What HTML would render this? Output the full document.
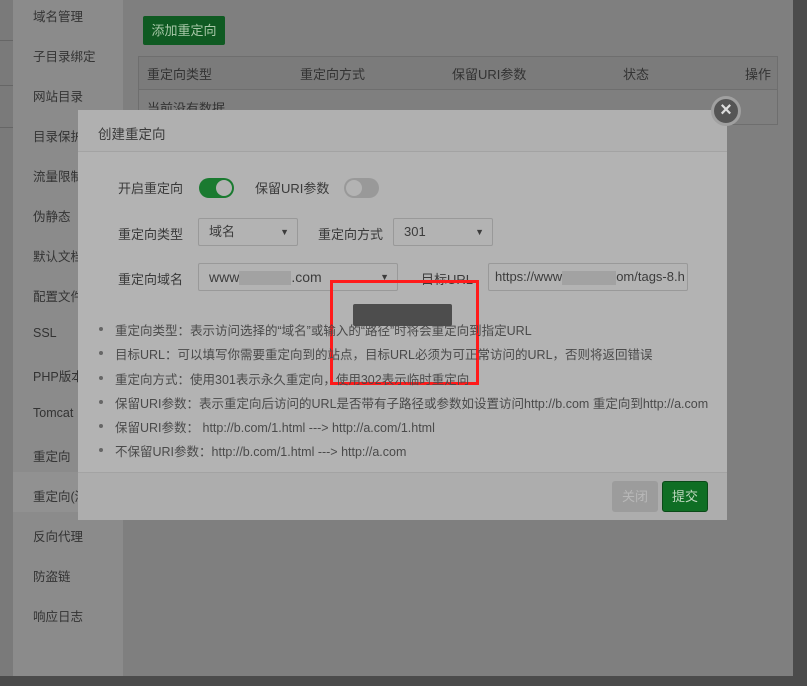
<!DOCTYPE html>
<html><head><meta charset="utf-8"><style>
*{margin:0;padding:0;box-sizing:border-box}
body{width:807px;height:686px;overflow:hidden;background:#4b4b4b;font-family:"Liberation Sans","Noto Sans CJK SC",sans-serif;font-size:13px;color:#3a3a3a;position:relative}
.a{position:absolute}
.strip{left:0;top:0;width:13px;height:676px;background:#7a7a7a}
.side{left:13px;top:0;width:110px;height:676px;background:#8b8b8b}
.side div{position:absolute;left:20px;font-size:12.5px;color:#333;white-space:nowrap}
.main{left:123px;top:0;width:670px;height:676px;background:#7f7f7f}
.modal{left:78px;top:110px;width:649px;height:410px;background:#b3b3b3}
.sel{border:1px solid #999;border-radius:2px;background:#b3b3b3;height:28px;line-height:26px;padding-left:10px;color:#3c3c3c}
.tri{position:absolute;right:8px;top:0;font-size:9px}
.li{position:absolute;left:37px;font-size:12.5px;color:#4a4a4a;white-space:nowrap}
.li:before{content:"";position:absolute;left:-16px;top:7px;width:4px;height:4px;border-radius:2px;background:#666}
</style></head><body>
<div class="a strip"></div>
<div class="a" style="left:0;top:40px;width:13px;height:1px;background:#666"></div>
<div class="a" style="left:0;top:85px;width:13px;height:1px;background:#666"></div>
<div class="a" style="left:0;top:127px;width:13px;height:1px;background:#666"></div>
<div class="a side">
<div style="top:6px">域名管理</div><div style="top:46px">子目录绑定</div><div style="top:86px">网站目录</div><div style="top:126px">目录保护</div><div style="top:166px">流量限制</div><div style="top:206px">伪静态</div><div style="top:246px">默认文档</div><div style="top:286px">配置文件</div><div style="top:326px">SSL</div><div style="top:366px">PHP版本</div><div style="top:406px">Tomcat</div><div style="top:446px">重定向</div>
<div style="top:472px;left:0;width:110px;height:40px;background:#919191"></div>
<div style="top:486px">重定向(测</div><div style="top:526px">反向代理</div><div style="top:566px">防盗链</div><div style="top:606px">响应日志</div>
</div>
<div class="a main"></div>
<div class="a" style="left:143px;top:16px;width:82px;height:29px;background:#0f5a22;border-radius:2px;color:#a8c8a8;text-align:center;line-height:29px">添加重定向</div>
<div class="a" style="left:138px;top:56px;width:640px;height:69px;border:1px solid #6e6e6e;background:#7f7f7f"></div>
<div class="a" style="left:139px;top:57px;width:638px;height:33px;background:#7b7b7b;border-bottom:1px solid #6e6e6e"></div>
<div class="a" style="left:147px;top:64px;color:#333">重定向类型</div>
<div class="a" style="left:300px;top:64px;color:#333">重定向方式</div>
<div class="a" style="left:452px;top:64px;color:#333">保留URI参数</div>
<div class="a" style="left:623px;top:64px;color:#333">状态</div>
<div class="a" style="left:745px;top:64px;color:#333">操作</div>
<div class="a" style="left:147px;top:98px;color:#333">当前没有数据</div>

<div class="a modal">
<div class="a" style="left:0;top:0;width:649px;height:42px;background:#b0b0b0;border-bottom:1px solid #a3a3a3"></div>
<div class="a" style="left:20px;top:13px;font-size:13.5px;color:#3a3a3a">创建重定向</div>
<div class="a" style="left:40px;top:68px">开启重定向</div>
<div class="a" style="left:121px;top:68px;width:35px;height:20px;border-radius:10px;background:#1a7a30"><div class="a" style="right:2px;top:2px;width:16px;height:16px;border-radius:8px;background:#b3b3b3"></div></div>
<div class="a" style="left:177px;top:68px">保留URI参数</div>
<div class="a" style="left:266px;top:68px;width:35px;height:20px;border-radius:10px;background:#999"><div class="a" style="left:2px;top:2px;width:16px;height:16px;border-radius:8px;background:#b3b3b3"></div></div>
<div class="a" style="left:40px;top:114px">重定向类型</div>
<div class="a sel" style="left:120px;top:108px;width:100px">域名<span class="tri">▼</span></div>
<div class="a" style="left:240px;top:114px">重定向方式</div>
<div class="a sel" style="left:315px;top:108px;width:100px">301<span class="tri">▼</span></div>
<div class="a" style="left:40px;top:159px">重定向域名</div>
<div class="a sel" style="left:120px;top:153px;width:200px;font-size:14px">www<span style="display:inline-block;width:52px;height:14px;background:#a2a2a2;vertical-align:middle"></span>.com<span class="tri">▼</span></div>
<div class="a" style="left:343px;top:159px">目标URL</div>
<div class="a sel" style="left:410px;top:153px;width:200px;padding-left:6px;overflow:hidden;white-space:nowrap">https://www<span style="display:inline-block;width:54px;height:14px;background:#a2a2a2;vertical-align:middle"></span>om/tags-8.h</div>
<div class="a" style="left:275px;top:194px;width:99px;height:22px;background:#4d4d4d;border-radius:2px"></div>
<div class="a" style="left:252px;top:170px;width:149px;height:105px;border:3px solid #ff1a1a"></div>
<div class="li" style="top:210px">重定向类型：表示访问选择的“域名”或输入的“路径”时将会重定向到指定URL</div>
<div class="li" style="top:234px">目标URL：可以填写你需要重定向到的站点，目标URL必须为可正常访问的URL，否则将返回错误</div>
<div class="li" style="top:259px">重定向方式：使用301表示永久重定向，使用302表示临时重定向</div>
<div class="li" style="top:283px">保留URI参数：表示重定向后访问的URL是否带有子路径或参数如设置访问http://b.com 重定向到http://a.com</div>
<div class="li" style="top:307px">保留URI参数： http://b.com/1.html ---&gt; http://a.com/1.html</div>
<div class="li" style="top:331px">不保留URI参数：http://b.com/1.html ---&gt; http://a.com</div>
<div class="a" style="left:0;top:362px;width:649px;height:48px;background:#adadad;border-top:1px solid #a3a3a3"></div>
<div class="a" style="left:534px;top:371px;width:46px;height:31px;background:#9c9c9c;border-radius:3px;color:#b8b8b8;text-align:center;line-height:31px">关闭</div>
<div class="a" style="left:584px;top:371px;width:46px;height:31px;background:#0f6e24;border:1px solid #0a4a18;border-radius:3px;color:#c0d8c0;text-align:center;line-height:29px">提交</div>
</div>
<div class="a" style="left:711px;top:96px;width:30px;height:30px;border-radius:15px;background:#555;border:3px solid #a0a0a0;color:#ddd;text-align:center;line-height:23px;font-size:20px;font-weight:bold">×</div>
</body></html>
